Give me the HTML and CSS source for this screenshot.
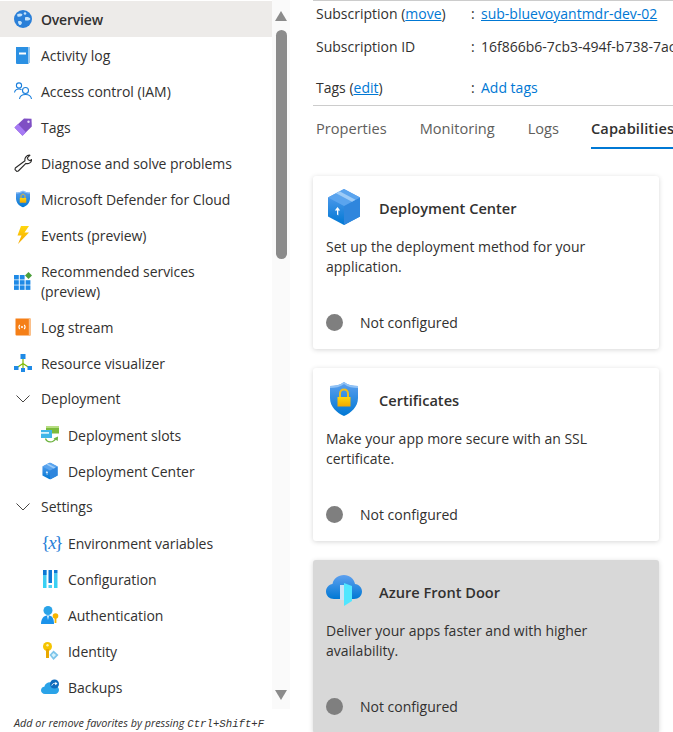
FILE: index.html
```html
<!DOCTYPE html>
<html lang="en">
<head>
    <meta charset="UTF-8">
    <meta name="viewport" content="width=device-width, initial-scale=1.0">
    <title>App Service Overview</title>
    <link rel="stylesheet" href="styles.css">
</head>
<body>
    <svg class="defs" width="0" height="0">
        <defs>
            <linearGradient id="blue-v" x1="0" y1="0" x2="0" y2="1">
                <stop offset="0" stop-color="#5ea0ef"/>
                <stop offset="1" stop-color="#0078d4"/>
            </linearGradient>
            <linearGradient id="sky-v" x1="0" y1="0" x2="0" y2="1">
                <stop offset="0" stop-color="#50c7f0"/>
                <stop offset="1" stop-color="#32d4f5"/>
            </linearGradient>
            <linearGradient id="gold-v" x1="0" y1="0" x2="0" y2="1">
                <stop offset="0" stop-color="#ffd70f"/>
                <stop offset="1" stop-color="#f5a800"/>
            </linearGradient>
            <symbol id="box" viewBox="0 0 32 36">
                <path d="M16 0 32 8.500V27.500L16 36 0 27.500V8.500Z" fill="url(#blue-v)"/>
                <path d="M16 17 32 8.500V27.500L16 36Z" fill="#2f86dd"/>
                <path d="M16 0 32 8.500 16 17 0 8.500Z" fill="#5aa4ee"/>
                <path d="M8 4.200 24 12.700 27.500 10.800 11.500 2.300Z" fill="#9ccbf7"/>
                <path d="M9 25.500V21.500H6.800L9.500 18 12.200 21.500H10.300V26.500Z" fill="#fff"/>
            </symbol>
            <symbol id="shield" viewBox="0 0 28 34">
                <path d="M14 0C18 3 23 4 28 4V16C28 25 21 31 14 34 7 31 0 25 0 16V4C5 4 10 3 14 0Z" fill="url(#blue-v)"/>
                <path d="M14 0C18 3 23 4 28 4V6C23 6 18 5 14 2 10 5 5 6 0 6V4C5 4 10 3 14 0Z" fill="#92c3f5"/>
                <rect x="7.500" y="15" width="13" height="9.500" fill="url(#gold-v)"/>
                <path d="M10 15V11.500C10 9 12 7.500 14 7.500S18 9 18 11.500V15" fill="none" stroke="#f0bd1c" stroke-width="2"/>
            </symbol>
        </defs>
    </svg>

    <aside class="sidebar">
        <div class="sidebar-body">
            <nav class="nav">
                <a class="nav-item active">
                    <svg class="icon" viewBox="0 0 18 18"><circle cx="9" cy="9" r="9" fill="#2a7fd8"/><path d="M3 4.500C5 3 7.500 3 8.500 4.500 8 6.500 5.500 7 3.500 6.500ZM11 7.500C12.500 6.700 15.500 7 16.500 9 15.500 10.500 12.500 11 11 10.200ZM4 11.500C5.500 10.800 7 11 8 12.500 7.500 14.500 6.500 15.300 5.500 15 4.500 14 4 13 4 11.500Z" fill="#c4e2fa"/><circle cx="11" cy="3.500" r="1.300" fill="#c4e2fa"/></svg>
                    <span class="nav-label">Overview</span>
                </a>
                <a class="nav-item">
                    <svg class="icon" viewBox="0 0 18 18"><path d="M2 1H14.500V18H3A1 1 0 0 1 2 17Z" fill="#2b90e3"/><path d="M14.500 1H16V17H14.500Z" fill="#9cc9ef"/><rect x="5" y="6.500" width="7" height="2" fill="#fff"/></svg>
                    <span class="nav-label">Activity log</span>
                </a>
                <a class="nav-item">
                    <svg class="icon" viewBox="0 0 18 18" fill="none" stroke="#1a7fdc" stroke-width="1.100"><circle cx="5" cy="3.500" r="2.600"/><path d="M.5 10.500C1 8 3 7 5 7 6 7 6.800 7.200 7.500 7.700"/><circle cx="11.500" cy="8.500" r="3"/><path d="M5.500 17C6 13.500 8.500 12.500 11.500 12.500S17 13.500 17.500 17"/></svg>
                    <span class="nav-label">Access control (IAM)</span>
                </a>
                <a class="nav-item">
                    <svg class="icon" viewBox="0 0 18 18"><path d="M10 .5 17.500 .8 17.800 8.500 8.500 17.800.5 9.500Z" fill="#7f4fc4"/><path d="M.5 9.500 8.500 17.800 12 14.300 4 6Z" fill="#a67af4"/><circle cx="14.500" cy="3.800" r="1.200" fill="#e6d8fa"/></svg>
                    <span class="nav-label">Tags</span>
                </a>
                <a class="nav-item">
                    <svg class="icon" viewBox="0 0 18 18"><path d="M11 6.800C10.300 4 12.500 .8 16 1.200L13.300 3.900 14.200 5.800 16.200 6.700 17.500 5.500C17.800 8.500 14.600 10.300 11.900 9.400L4.300 17 2.800 17.400 1 15.600 1.300 14Z" fill="#fff" stroke="#2b2a29" stroke-width="1.100" stroke-linejoin="round"/></svg>
                    <span class="nav-label">Diagnose and solve problems</span>
                </a>
                <a class="nav-item">
                    <svg class="icon" viewBox="0 0 18 18"><use href="#shield" x="2" y="0.500" width="14" height="17"/></svg>
                    <span class="nav-label">Microsoft Defender for Cloud</span>
                </a>
                <a class="nav-item">
                    <svg class="icon" viewBox="0 0 18 18"><path d="M7 0H15L10.500 6.500H15L4 18 7.500 9.500H3.500Z" fill="url(#gold-v)"/></svg>
                    <span class="nav-label">Events (preview)</span>
                </a>
                <a class="nav-item tall">
                    <svg class="icon" viewBox="0 0 18 18"><g fill="#1f8ae6"><rect y="3" width="4.800" height="4.500"/><rect x="5.800" y="3" width="4.800" height="4.500"/><rect y="8.200" width="4.800" height="4.500"/><rect x="5.800" y="8.200" width="4.800" height="4.500"/><rect x="11.600" y="8.200" width="4.800" height="4.500"/><rect y="13.400" width="4.800" height="4.500"/><rect x="5.800" y="13.400" width="4.800" height="4.500"/><rect x="11.600" y="13.400" width="4.800" height="4.500"/></g><path d="M14.500 0 18 3.500 14.500 7 11 3.500Z" fill="#4b9f3a"/></svg>
                    <span class="nav-label">Recommended services<br>(preview)</span>
                </a>
                <a class="nav-item">
                    <svg class="icon" viewBox="0 0 18 18"><path d="M1.500 .5H16.500V17.500H2.500A1 1 0 0 1 1.500 16.500Z" fill="#f57f17"/><path d="M14.800 .5H16.500V17.500H14.800Z" fill="#fbc08a"/><circle cx="8" cy="9" r="1" fill="#fff"/><path d="M5.800 6.800C4.800 8 4.800 10 5.800 11.200M10.200 6.800C11.200 8 11.200 10 10.200 11.200" fill="none" stroke="#fff" stroke-width="1.100"/></svg>
                    <span class="nav-label">Log stream</span>
                </a>
                <a class="nav-item">
                    <svg class="icon" viewBox="0 0 18 18"><path d="M9 5V15M9 9.500 3 13.500M9 9.500 15 13.500" stroke="#7fba00" stroke-width="1.200" fill="none"/><g fill="#1f8ae6"><rect x="6.500" y="0" width="5" height="5"/><rect x="0" y="12" width="4.500" height="4"/><rect x="13.500" y="12" width="4.500" height="4"/><rect x="7" y="14" width="4" height="4"/></g></svg>
                    <span class="nav-label">Resource visualizer</span>
                </a>

                <div class="nav-group">
                    <svg class="chevron" viewBox="0 0 14 8"><path d="M.5 .5 7 7 13.500 .5" fill="none" stroke="#484644"/></svg>
                    <span class="nav-label">Deployment</span>
                </div>
                <a class="nav-item sub">
                    <svg class="icon" viewBox="0 0 18 18"><rect x="5" y="0" width="13" height="7.500" fill="#7cbb3c"/><rect x="5" y="0" width="13" height="2" fill="#b7dd82"/><rect x="0" y="4" width="11" height="8" fill="#3fb6e8"/><rect x="0" y="6" width="8" height="1.800" fill="#d5f1fb"/><path d="M4.500 12.500C6 16.800 12 17.400 14.800 12.500" fill="none" stroke="#6db33f" stroke-width="1.300"/><path d="M12.500 12.500 17 10.500 16.800 15Z" fill="#6db33f"/></svg>
                    <span class="nav-label">Deployment slots</span>
                </a>
                <a class="nav-item sub">
                    <svg class="icon" viewBox="0 0 18 18"><use href="#box" x="1" y="0.500" width="16" height="17"/></svg>
                    <span class="nav-label">Deployment Center</span>
                </a>

                <div class="nav-group">
                    <svg class="chevron" viewBox="0 0 14 8"><path d="M.5 .5 7 7 13.500 .5" fill="none" stroke="#484644"/></svg>
                    <span class="nav-label">Settings</span>
                </div>
                <a class="nav-item sub">
                    <span class="icon var-glyph">{<i>x</i>}</span>
                    <span class="nav-label">Environment variables</span>
                </a>
                <a class="nav-item sub">
                    <svg class="icon" viewBox="0 0 18 18"><rect x="2" y="0" width="3.500" height="18" fill="url(#sky-v)"/><rect x="2" y="0" width="3.500" height="5" fill="#0f78d4"/><rect x="7.500" y="0" width="3.500" height="13" fill="#0f78d4"/><rect x="7.500" y="15" width="3.500" height="3" fill="#50d0f5"/><rect x="13" y="0" width="3.500" height="3" fill="#0f78d4"/><rect x="13" y="3" width="3.500" height="15" fill="url(#sky-v)"/></svg>
                    <span class="nav-label">Configuration</span>
                </a>
                <a class="nav-item sub">
                    <svg class="icon" viewBox="0 0 18 18"><circle cx="7" cy="4.500" r="4.500" fill="#2aa3e8"/><path d="M0 18C0 12 3 9.500 7 9.500S13 12 13 18Z" fill="#1b93eb"/><path d="M6 10H8L7 14Z" fill="#d5f1fb"/><circle cx="14.500" cy="10" r="2.800" fill="#f5b400"/><rect x="13.600" y="11" width="1.800" height="6" fill="#f5b400"/></svg>
                    <span class="nav-label">Authentication</span>
                </a>
                <a class="nav-item sub">
                    <svg class="icon" viewBox="0 0 18 18"><circle cx="6.500" cy="4.500" r="4.500" fill="#f5c400"/><rect x="5" y="7" width="3" height="9" fill="#e9a800"/><circle cx="6.500" cy="3.300" r="1.200" fill="#fff3b0"/><path d="M12.500 8.500 17.500 13 12.500 18 8.500 13Z" fill="#7cc4ea"/><path d="M12.500 11 15 13 12.500 15.500 10.500 13Z" fill="#d5f1fb"/></svg>
                    <span class="nav-label">Identity</span>
                </a>
                <a class="nav-item sub">
                    <svg class="icon" viewBox="0 0 18 18"><path d="M4 16C1.500 16 0 14.300 0 12.300 0 10.300 1.500 9 3.300 8.800 4 6 6.300 4.300 9 4.300 11.500 4.300 13 6 13.700 8 16 8 18 9.500 18 12 18 14.300 16.300 16 14 16Z" fill="#2aa3e8"/><circle cx="13.500" cy="6" r="4.500" fill="#0f6cbd"/><path d="M10.800 7.500C11.500 5.500 13 5 15 5.500" stroke="#fff" fill="none"/><path d="M14.500 3.800 16.500 5.800 14 7.200Z" fill="#fff"/></svg>
                    <span class="nav-label">Backups</span>
                </a>
            </nav>
            <div class="scrollbar">
                <span class="arrow-up"></span>
                <span class="thumb"></span>
                <span class="arrow-down"></span>
            </div>
        </div>
        <p class="hint">Add or remove favorites by pressing <kbd>Ctrl+Shift+F</kbd></p>
    </aside>

    <main class="content">
        <div class="info">
            <div class="info-row">
                <span class="info-label">Subscription (<a href="#">move</a>)</span>
                <span class="info-colon">:</span>
                <a href="#">sub-bluevoyantmdr-dev-02</a>
            </div>
            <div class="info-row">
                <span class="info-label">Subscription ID</span>
                <span class="info-colon">:</span>
                <span>16f866b6-7cb3-494f-b738-7ac</span>
            </div>
            <div class="info-row tags-row">
                <span class="info-label">Tags (<a href="#">edit</a>)</span>
                <span class="info-colon">:</span>
                <a class="plain" href="#">Add tags</a>
            </div>
        </div>

        <div class="tabs">
            <span class="tab">Properties</span>
            <span class="tab">Monitoring</span>
            <span class="tab">Logs</span>
            <span class="tab selected">Capabilities</span>
        </div>

        <div class="cards">
            <section class="card">
                <div class="card-head">
                    <svg class="card-icon" viewBox="0 0 36 36"><use href="#box" x="2" y="0" width="32" height="36"/></svg>
                    <h3>Deployment Center</h3>
                </div>
                <p>Set up the deployment method for your application.</p>
                <div class="status"><span class="dot"></span>Not configured</div>
            </section>
            <section class="card">
                <div class="card-head">
                    <svg class="card-icon" viewBox="0 0 36 36"><use href="#shield" x="4" y="1" width="28" height="34"/></svg>
                    <h3>Certificates</h3>
                </div>
                <p>Make your app more secure with an SSL certificate.</p>
                <div class="status"><span class="dot"></span>Not configured</div>
            </section>
            <section class="card disabled">
                <div class="card-head">
                    <svg class="card-icon" viewBox="0 0 36 36"><path d="M8 26C3.500 26 0 23 0 18.500 0 14.500 3 11.500 6.500 11 7.500 5.500 12 2 18 2 23.500 2 28 5.500 29 11 33 11.500 36 14.500 36 18.500 36 23 32.500 26 28 26Z" fill="url(#blue-v)"/><path d="M14 12H19V27H14Z" fill="#c9e3f7"/><path d="M18 10 26 13V28L18 33Z" fill="#50e6ff"/></svg>
                    <h3>Azure Front Door</h3>
                </div>
                <p>Deliver your apps faster and with higher availability.</p>
                <div class="status"><span class="dot"></span>Not configured</div>
            </section>
        </div>
    </main>
</body>
</html>
```

FILE: styles.css
```css
* {
    box-sizing: border-box;
}
html, body {
    height: 100%;
}
body {
    margin: 0;
    height: 732px;
    overflow: hidden;
    display: flex;
    background: #fff;
    color: #323130;
    font-family: "Open Sans", "Noto Sans", sans-serif;
    font-size: 14px;
}
a {
    color: #0078d4;
}
.defs {
    position: absolute;
}

/* left menu */
.sidebar {
    width: 290px;
    flex: none;
    display: flex;
    flex-direction: column;
}
.sidebar-body {
    height: 709px;
    display: flex;
}
.nav {
    width: 272px;
    padding-top: 1px;
    overflow: hidden;
}
.nav-item, .nav-group {
    display: flex;
    align-items: center;
    padding-left: 14px;
    min-height: 36px;
    color: #323130;
    letter-spacing: -0.05px;
}
.nav-item.sub {
    padding-left: 41px;
}
.nav-item.tall {
    min-height: 56px;
}
.nav-item.active {
    background: #edebe9;
    font-weight: 600;
    letter-spacing: -0.2px;
}
.nav-group {
    padding-bottom: 1px;
}
.icon {
    width: 18px;
    height: 18px;
    flex: none;
    margin-right: 9px;
}
.chevron {
    width: 14px;
    height: 8px;
    margin: 0 11px 0 2px;
}
.nav-item .nav-label {
    padding-top: 1px;
}
.nav-label {
    line-height: 20px;
}
.var-glyph {
    color: #2a7fd8;
    font-family: "Liberation Serif", serif;
    font-size: 19px;
    line-height: 18px;
    letter-spacing: -2px;
    white-space: nowrap;
}
.scrollbar {
    width: 18px;
    background: #fafafa;
    display: flex;
    flex-direction: column;
    align-items: center;
    padding: 11px 0 9px;
}
.arrow-up, .arrow-down {
    width: 0;
    height: 0;
    border-left: 6px solid transparent;
    border-right: 6px solid transparent;
}
.arrow-up {
    border-bottom: 10px solid #8b8b8b;
}
.arrow-down {
    border-top: 10px solid #8b8b8b;
}
.thumb {
    width: 11px;
    height: 229px;
    margin: 9px 0 auto;
    border-radius: 6px;
    background: #8b8b8b;
}
.hint {
    margin: 0;
    padding: 6px 0 0 14px;
    font-size: 10.800px;
    font-style: italic;
    white-space: nowrap;
}
.hint kbd {
    font-family: "Liberation Mono", monospace;
    font-size: 10.700px;
    font-style: italic;
}

/* right panel */
.content {
    flex: 1;
    min-width: 0;
    padding-left: 23px;
    overflow: hidden;
}
.info {
    border-top: 1px solid #ccc;
    border-bottom: 1px solid #ccc;
    height: 106px;
    padding: 2px 0 0 3px;
    white-space: nowrap;
}
.info-row {
    display: flex;
    height: 33px;
    line-height: 22px;
}
.tags-row {
    margin-top: 8px;
}
.info-label {
    width: 155px;
    flex: none;
}
.info-colon {
    width: 10px;
    flex: none;
}
a.plain {
    text-decoration: none;
}
.tabs {
    display: flex;
    gap: 33px;
    height: 43px;
    padding: 11px 0 0 3px;
    color: #605e5c;
    font-size: 14.600px;
    white-space: nowrap;
}
.tab {
    line-height: 22px;
}
.tab.selected {
    margin-left: -1px;
    color: #323130;
    font-weight: 600;
    height: 32px;
    border-bottom: 2px solid #0078d4;
    letter-spacing: 0.1px;
}
.cards {
    display: flex;
    flex-direction: column;
    gap: 19px;
    padding-top: 27px;
    width: 346px;
}
.card {
    height: 173px;
    flex: none;
    padding: 13px 13px 0;
    background: #fff;
    border-radius: 3px;
    box-shadow: 0 1px 5px rgba(0, 0, 0, 0.16);
}
.card.disabled {
    background: #d8d8d8;
}
.card-head {
    display: flex;
    align-items: center;
    gap: 17px;
}
.card-icon {
    width: 36px;
    height: 36px;
    flex: none;
}
h3 {
    margin: 0;
    padding-top: 2px;
    font-size: 14.600px;
    font-weight: 600;
}
.card p {
    margin: 12px 0 0;
    height: 76px;
    line-height: 20px;
}
.status {
    display: flex;
    align-items: center;
    gap: 17px;
}
.dot {
    width: 17px;
    height: 17px;
    border-radius: 50%;
    background: #7f7f7f;
}
```
